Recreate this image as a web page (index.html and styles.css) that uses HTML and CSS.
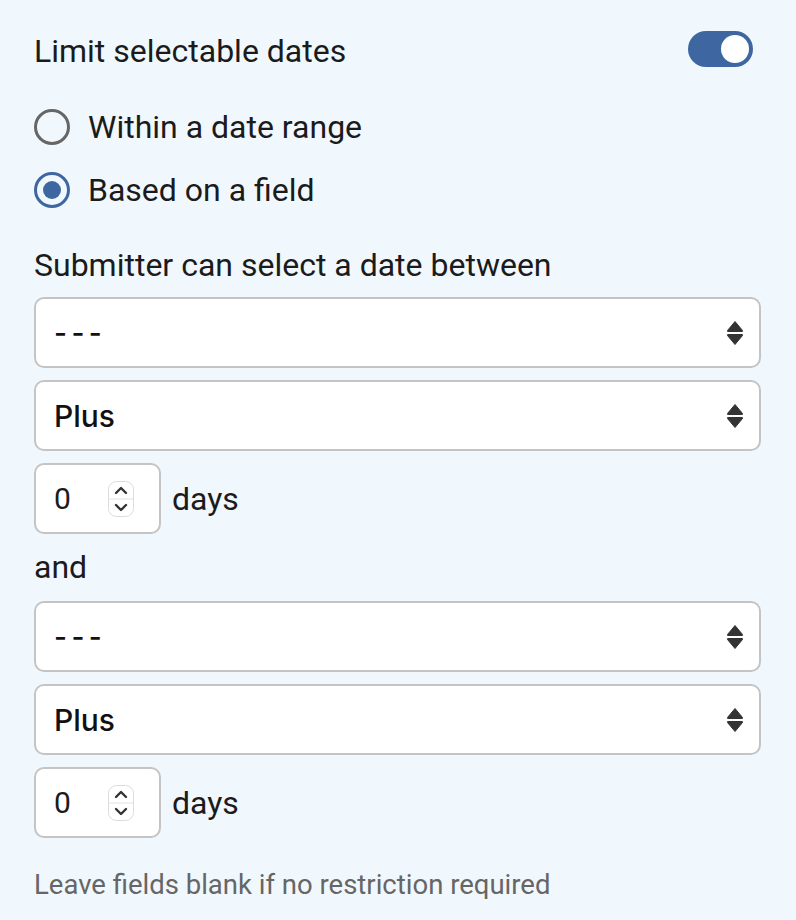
FILE: index.html
```html
<!DOCTYPE html>
<html lang="en">
<head>
<meta charset="utf-8">
<title>Limit selectable dates</title>
<link rel="stylesheet" href="styles.css">
</head>
<body>
<div class="panel">
  <div class="title-row">
    <span class="title">Limit selectable dates</span>
    <span class="toggle"><span class="knob"></span></span>
  </div>

  <div class="radio-row first">
    <span class="radio"></span>
    <span class="radio-label">Within a date range</span>
  </div>
  <div class="radio-row">
    <span class="radio checked"><span class="dot"></span></span>
    <span class="radio-label">Based on a field</span>
  </div>

  <div class="label">Submitter can select a date between</div>

  <div class="select first-select">
    <span class="select-text dashes">- - -</span>
    <svg class="arrows" width="18" height="28" viewBox="0 0 18 28"><path d="M9 2.5 L16.5 11.5 Q17 12.5 16 12.5 L2 12.5 Q1 12.5 1.5 11.5 Z" fill="#333" stroke="#333" stroke-width="1" stroke-linejoin="round"/><path d="M9 25.5 L16.5 16.5 Q17 15.5 16 15.5 L2 15.5 Q1 15.5 1.5 16.5 Z" fill="#333" stroke="#333" stroke-width="1" stroke-linejoin="round"/></svg>
  </div>
  <div class="select">
    <span class="select-text">Plus</span>
    <svg class="arrows" width="18" height="28" viewBox="0 0 18 28"><path d="M9 2.5 L16.5 11.5 Q17 12.5 16 12.5 L2 12.5 Q1 12.5 1.5 11.5 Z" fill="#333" stroke="#333" stroke-width="1" stroke-linejoin="round"/><path d="M9 25.5 L16.5 16.5 Q17 15.5 16 15.5 L2 15.5 Q1 15.5 1.5 16.5 Z" fill="#333" stroke="#333" stroke-width="1" stroke-linejoin="round"/></svg>
  </div>
  <div class="number-row">
    <div class="number">
      <span class="num-text">0</span>
      <svg class="spinner" width="26" height="36" viewBox="0 0 26 36"><rect x="0.5" y="0.5" width="25" height="35" rx="8" fill="#fff" stroke="#dcdcdc"/><line x1="1" y1="18" x2="25" y2="18" stroke="#e2e2e2"/><path d="M8 12 L13 7 L18 12" fill="none" stroke="#333" stroke-width="2.4" stroke-linecap="round" stroke-linejoin="round"/><path d="M8 24 L13 29 L18 24" fill="none" stroke="#333" stroke-width="2.4" stroke-linecap="round" stroke-linejoin="round"/></svg>
    </div>
    <span class="days">days</span>
  </div>

  <div class="and">and</div>

  <div class="select first-select">
    <span class="select-text dashes">- - -</span>
    <svg class="arrows" width="18" height="28" viewBox="0 0 18 28"><path d="M9 2.5 L16.5 11.5 Q17 12.5 16 12.5 L2 12.5 Q1 12.5 1.5 11.5 Z" fill="#333" stroke="#333" stroke-width="1" stroke-linejoin="round"/><path d="M9 25.5 L16.5 16.5 Q17 15.5 16 15.5 L2 15.5 Q1 15.5 1.5 16.5 Z" fill="#333" stroke="#333" stroke-width="1" stroke-linejoin="round"/></svg>
  </div>
  <div class="select">
    <span class="select-text">Plus</span>
    <svg class="arrows" width="18" height="28" viewBox="0 0 18 28"><path d="M9 2.5 L16.5 11.5 Q17 12.5 16 12.5 L2 12.5 Q1 12.5 1.5 11.5 Z" fill="#333" stroke="#333" stroke-width="1" stroke-linejoin="round"/><path d="M9 25.5 L16.5 16.5 Q17 15.5 16 15.5 L2 15.5 Q1 15.5 1.5 16.5 Z" fill="#333" stroke="#333" stroke-width="1" stroke-linejoin="round"/></svg>
  </div>
  <div class="number-row">
    <div class="number">
      <span class="num-text">0</span>
      <svg class="spinner" width="26" height="36" viewBox="0 0 26 36"><rect x="0.5" y="0.5" width="25" height="35" rx="8" fill="#fff" stroke="#dcdcdc"/><line x1="1" y1="18" x2="25" y2="18" stroke="#e2e2e2"/><path d="M8 12 L13 7 L18 12" fill="none" stroke="#333" stroke-width="2.4" stroke-linecap="round" stroke-linejoin="round"/><path d="M8 24 L13 29 L18 24" fill="none" stroke="#333" stroke-width="2.4" stroke-linecap="round" stroke-linejoin="round"/></svg>
    </div>
    <span class="days">days</span>
  </div>

  <div class="note">Leave fields blank if no restriction required</div>
</div>
</body>
</html>
```

FILE: styles.css
```css
html, body {
  margin: 0;
  padding: 0;
  background: #f1f8fd;
}

body {
  font-family: Roboto, "Noto Sans", sans-serif;
  color: #1b1b1b;
  font-size: 32px;
}

.panel {
  padding: 31px 35px 0 34px;
  display: flex;
  flex-direction: column;
}

.title-row {
  display: flex;
  justify-content: space-between;
  align-items: center;
  height: 36px;
}

.title {
  line-height: 34px;
  padding-top: 3px;
}

.toggle {
  width: 65px;
  height: 36px;
  border-radius: 18px;
  background: #3e67a2;
  display: flex;
  align-items: center;
  justify-content: flex-end;
  padding-right: 4px;
  box-sizing: border-box;
  margin-right: 8px;
}

.knob {
  width: 28px;
  height: 28px;
  border-radius: 50%;
  background: #fff;
}

.radio-row {
  display: flex;
  align-items: center;
  height: 40px;
  margin-top: 23px;
}

.radio-row.first {
  margin-top: 40px;
}

.radio {
  width: 36px;
  height: 36px;
  box-sizing: border-box;
  border: 3px solid #666;
  border-radius: 50%;
  display: flex;
  align-items: center;
  justify-content: center;
  flex-shrink: 0;
}

.radio.checked {
  border-color: #3e67a2;
}

.dot {
  width: 18px;
  height: 18px;
  border-radius: 50%;
  background: #3e67a2;
}

.radio-label {
  margin-left: 18px;
  line-height: 34px;
}

.label {
  margin-top: 38px;
  line-height: 34px;
}

.select {
  height: 71px;
  box-sizing: border-box;
  border: 2px solid #c4c4c4;
  border-radius: 10px;
  background: #fff;
  display: flex;
  align-items: center;
  justify-content: space-between;
  padding: 0 15px 0 18px;
  margin-top: 12px;
}

.select.first-select {
  margin-top: 15px;
}

.select-text {
  font-family: Inter, "Liberation Sans", sans-serif;
  font-weight: 500;
  font-size: 30px;
  color: #111;
}

.select-text.dashes {
  font-size: 28px;
  letter-spacing: -1.5px;
}

.and + .select.first-select {
  margin-top: 17px;
}

.number-row {
  display: flex;
  align-items: center;
  margin-top: 12px;
}

.number {
  width: 127px;
  height: 71px;
  box-sizing: border-box;
  border: 2px solid #c4c4c4;
  border-radius: 10px;
  background: #fff;
  display: flex;
  align-items: center;
  justify-content: space-between;
  padding: 0 25px 0 18px;
}

.num-text {
  font-size: 30px;
}

.days {
  margin-left: 11px;
}

.and {
  margin-top: 16px;
  line-height: 34px;
}

.note {
  margin-top: 33px;
  font-size: 27.5px;
  line-height: 28px;
  color: #666;
}
```
